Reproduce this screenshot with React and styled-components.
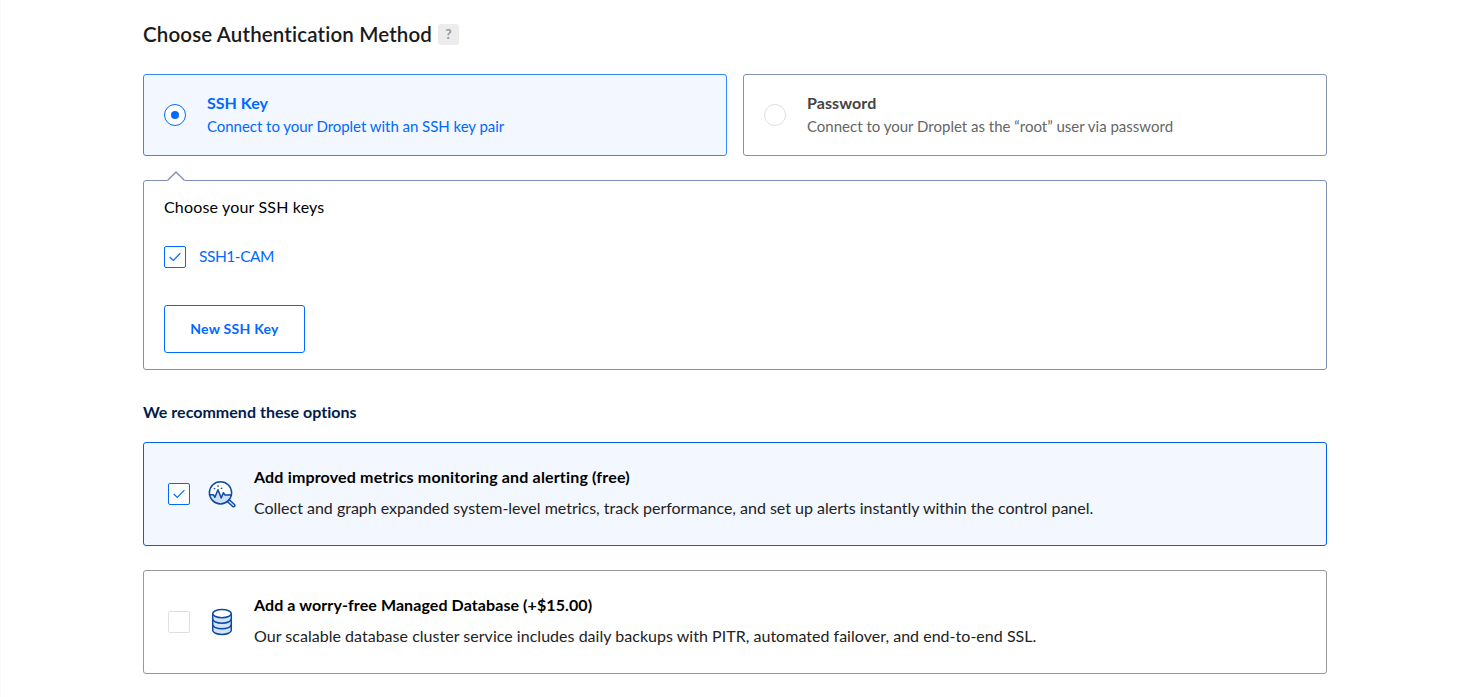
import React from 'react';
import styled, { createGlobalStyle } from 'styled-components';

const GlobalStyle = createGlobalStyle`
  *, *::before, *::after { box-sizing: border-box; }
  body {
    margin: 0;
    background: #fff;
    color: #1b1b1d;
    font-family: Lato, "Liberation Sans", sans-serif;
    font-variant-ligatures: none;
  }
  h1, h2, h3, p { margin: 0; }
`;

const Page = styled.main`
  width: 1467px;
  height: 697px;
  padding: 22px 140px 0 142px;
  border-left: 1px solid #fafafa;
  overflow: hidden;
`;

const Heading = styled.header`
  display: flex;
  align-items: center;
  gap: 6px;
  height: 24px;
  margin-bottom: 28px;
`;

const Text = styled.p`
  font-size: ${({ $size = 16 }) => $size}px;
  line-height: ${({ $line = 24 }) => $line}px;
  font-weight: ${({ $weight = 400 }) => $weight};
  letter-spacing: ${({ $track = 0 }) => $track}px;
  color: ${({ $color = 'inherit' }) => $color};
  white-space: nowrap;
`;

const HelpBadge = styled.span`
  width: 21px;
  height: 21px;
  border-radius: 3px;
  background: #ececec;
  color: #999;
  font-size: 14px;
  font-weight: 700;
  line-height: 20px;
  text-align: center;
`;

const Methods = styled.div`
  display: grid;
  grid-template-columns: 1fr 1fr;
  gap: 16px;
`;

const MethodCard = styled.div`
  display: flex;
  align-items: center;
  gap: 21px;
  height: 82px;
  padding: 0 20px;
  border: 1px solid ${({ $selected }) => ($selected ? '#3387ff' : '#8490b0')};
  border-radius: 3px;
  background: ${({ $selected }) => ($selected ? '#f3f7ff' : '#fff')};
`;

const MethodText = styled.div`
  padding-bottom: 2px;
`;

const Radio = styled.span`
  display: grid;
  place-items: center;
  width: 22px;
  height: 22px;
  border: 1px solid ${({ $selected }) => ($selected ? '#0069ff' : '#dfdfdf')};
  border-radius: 50%;
  background: #fff;
  &::after {
    content: '';
    width: 8px;
    height: 8px;
    border-radius: 50%;
    background: ${({ $selected }) => ($selected ? '#0069ff' : 'transparent')};
  }
`;

const KeyPanel = styled.section`
  position: relative;
  display: flex;
  flex-direction: column;
  align-items: flex-start;
  height: 190px;
  margin-top: 24px;
  padding: 14px 20px 16px;
  border: 1px solid #7f8fb3;
  border-radius: 3px;
`;

const Pointer = styled.svg`
  position: absolute;
  top: -10px;
  left: 22px;
`;

const KeyRow = styled.label`
  display: flex;
  align-items: center;
  gap: 13px;
  height: 24px;
  margin-top: 26px;
`;

const KeyName = styled(Text)`
  padding-bottom: 2px;
`;

const Box = styled.span`
  display: grid;
  place-items: center;
  width: 22px;
  height: 22px;
  border: 1px solid ${({ $checked }) => ($checked ? '#0069ff' : '#dfdfdf')};
  border-radius: 2px;
  background: #fff;
`;

const KeyButton = styled.button`
  width: 141px;
  height: 48px;
  margin-top: auto;
  padding: 0;
  border: 1px solid #0069ff;
  border-radius: 3px;
  background: #fff;
  color: #0069ff;
  font: 700 14px/24px Lato, "Liberation Sans", sans-serif;
  letter-spacing: 0.26px;
`;

const Recommend = styled.section`
  display: flex;
  flex-direction: column;
  gap: 24px;
  margin-top: 31px;
`;

const RecommendTitle = styled.div`
  height: 17px;
  padding-top: 5px;
  display: flex;
  align-items: center;
`;

const OptionCard = styled.div`
  display: flex;
  align-items: center;
  height: 104px;
  padding: 0 24px;
  border: 1px solid ${({ $checked }) => ($checked ? '#0061eb' : '#999')};
  border-radius: 3px;
  background: ${({ $checked }) => ($checked ? '#f3f7ff' : '#fff')};
`;

const IconSlot = styled.span`
  display: flex;
  width: 28px;
  height: 28px;
  margin: 0 18px;
`;

const OptionText = styled.div`
  display: flex;
  flex-direction: column;
  gap: 7px;
  padding-bottom: 4px;
`;

function Checkbox({ checked }) {
  return (
    <Box $checked={checked}>
      {checked && (
        <svg width="12" height="10" viewBox="0 0 12 10" fill="none" stroke="#0069ff" strokeWidth="1.2">
          <path d="M.7 5 4.3 8.4 11.4 1.2" />
        </svg>
      )}
    </Box>
  );
}

function MetricsIcon() {
  return (
    <svg width="28" height="28" viewBox="0 0 28 28" fill="none" stroke="#0d4aa5" strokeWidth="1.5" strokeLinejoin="round" strokeLinecap="round">
      <circle cx="12.5" cy="12.8" r="11.1" fill="#fff" stroke="none" />
      <path d="M1.3 14.6H5.5L7 17.4 9.9 9.7 12.9 17.7 15.2 12.5 16.5 14.9 18.2 14.6H23.6A11.2 11.2 0 0 1 1.3 14.6Z" fill="#cfe0fb" stroke="none" />
      <circle cx="12.5" cy="12.8" r="11.1" />
      <path d="M1.5 14.7H5.4L6.9 17.3 10 9.7 13.2 17.9 15.4 12.7 16.8 14.9H23.4" />
      <path d="m19.5 21.7 1.9-1.9 5.1 4.7a1.3 1.3 0 0 1-1.8 1.9Z" fill="#cfe0fb" strokeWidth="1.4" />
      <g fill="#0d4aa5" stroke="none">
        <circle cx="6.5" cy="8.5" r=".85" />
        <circle cx="10" cy="6.1" r=".85" />
        <circle cx="13.5" cy="8.3" r=".85" />
      </g>
    </svg>
  );
}

function DatabaseIcon() {
  return (
    <svg width="28" height="28" viewBox="0 0 28 28" stroke="#0d4aa5" strokeWidth="1.5" fill="none">
      <path d="M4.7 5.4V22.2c0 2.4 4.2 4.2 9.3 4.2s9.3-1.8 9.3-4.2V5.4" fill="#d3e3fc" />
      <ellipse cx="14" cy="5.6" rx="9.3" ry="4.1" fill="#fff" />
      <path d="M4.7 11c0 2.4 4.2 4.2 9.3 4.2s9.3-1.8 9.3-4.2M4.7 16.6c0 2.4 4.2 4.2 9.3 4.2s9.3-1.8 9.3-4.2" />
    </svg>
  );
}

function Method({ selected, title, detail, titleColor, detailColor, titleTrack, track }) {
  return (
    <MethodCard $selected={selected}>
      <Radio $selected={selected} />
      <MethodText>
        <Text as="h3" $line={23} $weight={700} $track={titleTrack} $color={titleColor}>{title}</Text>
        <Text $size={15} $line={24} $track={track} $color={detailColor}>{detail}</Text>
      </MethodText>
    </MethodCard>
  );
}

function Option({ checked, icon, title, detail, titleTrack, track }) {
  return (
    <OptionCard $checked={checked}>
      <Checkbox checked={checked} />
      <IconSlot>{icon}</IconSlot>
      <OptionText>
        <Text as="h3" $weight={700} $color="#000" $track={titleTrack}>{title}</Text>
        <Text $color="#222" $track={track}>{detail}</Text>
      </OptionText>
    </OptionCard>
  );
}

export default function App() {
  return (
    <>
      <GlobalStyle />
      <Page>
        <Heading>
          <Text as="h1" $size={20.5} $weight={600} $track={0.155}>Choose Authentication Method</Text>
          <HelpBadge>?</HelpBadge>
        </Heading>
        <Methods>
          <Method selected title="SSH Key" detail="Connect to your Droplet with an SSH key pair" titleColor="#0069ff" detailColor="#0069ff" track={-0.04} />
          <Method title="Password" detail="Connect to your Droplet as the “root” user via password" titleColor="#444" detailColor="#666" titleTrack={0.1} />
        </Methods>
        <KeyPanel>
          <Pointer width="20" height="11" viewBox="0 0 20 11">
            <path d="M1.5 9.5 10 1 18.5 9.5V11H1.5Z" fill="#fff" />
            <path d="M1.5 9.5 10 1 18.5 9.5" fill="none" stroke="#7f8fb3" strokeWidth="1.3" />
          </Pointer>
          <Text $color="#000" $track={0.17}>Choose your SSH keys</Text>
          <KeyRow>
            <Checkbox checked />
            <KeyName as="span" $size={15.5} $track={-0.45} $color="#0069ff">SSH1-CAM</KeyName>
          </KeyRow>
          <KeyButton>New SSH Key</KeyButton>
        </KeyPanel>
        <Recommend>
          <RecommendTitle>
            <Text as="h2" $weight={700} $color="#031b4e" $track={0.02}>We recommend these options</Text>
          </RecommendTitle>
          <Option
            checked
            icon={<MetricsIcon />}
            title="Add improved metrics monitoring and alerting (free)"
            titleTrack={0.165}
            detail="Collect and graph expanded system-level metrics, track performance, and set up alerts instantly within the control panel."
            track={-0.01}
          />
          <Option
            icon={<DatabaseIcon />}
            title="Add a worry-free Managed Database (+$15.00)"
            titleTrack={0.09}
            detail="Our scalable database cluster service includes daily backups with PITR, automated failover, and end-to-end SSL."
            track={0.025}
          />
        </Recommend>
      </Page>
    </>
  );
}
